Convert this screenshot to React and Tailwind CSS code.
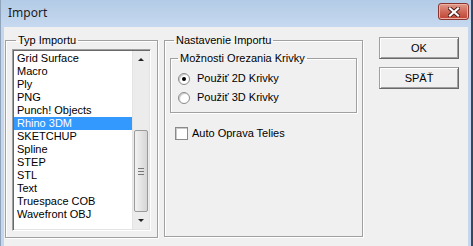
const FILE_TYPES = [
    'Grid Surface',
    'Macro',
    'Ply',
    'PNG',
    'Punch! Objects',
    'Rhino 3DM',
    'SKETCHUP',
    'Spline',
    'STEP',
    'STL',
    'Text',
    'Truespace COB',
    'Wavefront OBJ',
];

function Radio({ checked, label }) {
    return (
        <div className="flex items-center h-[19px]">
            <span className="w-[12px] h-[12px] rounded-full border border-[#8a8a8a] bg-white shadow-[inset_1px_1px_1px_#c8c8c8] flex items-center justify-center">
                {checked && <span className="w-[4px] h-[4px] rounded-full bg-black" />}
            </span>
            <span className="ml-[7px]">{label}</span>
        </div>
    );
}

function ScrollBar() {
    return (
        <div className="w-[17px] flex flex-col bg-[#ececec] border-l border-[#e3e3e3]">
            <div className="h-[17px] flex items-center justify-center">
                <span className="w-0 h-0 border-x-[3px] border-x-transparent border-b-[3px] border-b-[#222]" />
            </div>
            <div className="flex-1 flex flex-col">
                <div className="h-[62px]" />
                <div className="h-[82px] mx-[1px] rounded-[2px] border border-[#9a9a9a] bg-gradient-to-r from-[#f2f2f2] to-[#d6d6d6] flex flex-col items-center justify-center gap-[2px]">
                    <span className="w-[6px] h-px bg-[#777]" />
                    <span className="w-[6px] h-px bg-[#777]" />
                    <span className="w-[6px] h-px bg-[#777]" />
                </div>
                <div className="flex-1" />
            </div>
            <div className="h-[17px] flex items-center justify-center">
                <span className="w-0 h-0 border-x-[3px] border-x-transparent border-t-[3px] border-t-[#222]" />
            </div>
        </div>
    );
}

export default function App() {
    const groupClasses = "border border-[#a0a0a0] shadow-[1px_1px_0_#ffffff,inset_1px_1px_0_#ffffff]";
    const buttonClasses = "w-[80px] h-[22px] bg-[#f0f0f0] border border-[#a0a0a0] border-r-[#696969] border-b-[#696969] shadow-[inset_1px_1px_0_#ffffff,inset_-1px_-1px_0_#a0a0a0]";

    return (
        <div className="w-[473px] h-[246px] flex flex-col bg-[#c4d7ee] border-l border-[#8fa3bb] border-r-2 border-r-[#34485f] font-['Liberation_Sans',Arial,sans-serif] text-[11px] text-black overflow-hidden">
            {/* title bar */}
            <div className="h-[27px] flex items-center justify-between pl-[7px] pr-[2px] bg-gradient-to-b from-[#b3cbe6] to-[#c6d9ef]">
                <span className="font-['Noto_Sans',sans-serif] text-[12px] text-[#1b1b1b] -mt-[2px]">Import</span>
                <div className="w-[31px] h-[17px] -mt-[4px] rounded-[3px] border border-[#8a3530] bg-gradient-to-b from-[#e09a8a] via-[#cf6a5a] to-[#c0402f] flex items-center justify-center shadow-[inset_0_0_0_1px_#eeb0a2]">
                    <svg width="12" height="10" viewBox="0 0 12 10">
                        <path d="M2 1.5 L10 8.5 M10 1.5 L2 8.5" stroke="#4a1a16" strokeWidth="4" strokeLinecap="square" />
                        <path d="M2 1.5 L10 8.5 M10 1.5 L2 8.5" stroke="#ffffff" strokeWidth="2.2" strokeLinecap="square" />
                    </svg>
                </div>
            </div>

            {/* body */}
            <div className="flex-1 ml-[3px] mr-[3px] bg-[#f0f0f0] flex items-start">
                {/* Typ Importu */}
                <fieldset className={`${groupClasses} ml-[1px] mt-[7px] w-[153px] h-[204px] px-[6px]`}>
                    <legend className="ml-[4px] px-[2px] leading-[13px]">Typ Importu</legend>
                    <div className="mt-[2px] h-[182px] flex border border-[#a0a0a0] border-r-white border-b-white shadow-[inset_1px_1px_0_#696969,inset_-1px_-1px_0_#e3e3e3]">
                        <div className="flex-1 bg-white ml-[1px] mt-[1px] mb-[1px] pt-[1px]">
                            {FILE_TYPES.map((t) => (
                                <div
                                    key={t}
                                    className={`h-[13px] leading-[13px] pl-[3px] whitespace-nowrap ${t === 'Rhino 3DM' ? 'bg-[#3399ff] text-white' : ''}`}
                                >
                                    {t}
                                </div>
                            ))}
                        </div>
                        <div className="flex my-[1px] mr-[1px]">
                            <ScrollBar />
                        </div>
                    </div>
                </fieldset>

                {/* Nastavenie Importu */}
                <fieldset className={`${groupClasses} ml-[6px] mt-[7px] w-[199px] h-[203px] px-[5px]`}>
                    <legend className="ml-[4px] px-[2px] leading-[13px]">Nastavenie Importu</legend>
                    <fieldset className={`${groupClasses} mt-[5px] h-[61px] px-[7px]`}>
                        <legend className="ml-[0px] px-[2px] leading-[13px]">Možnosti Orezania Krivky</legend>
                        <div className="mt-[4px]">
                            <Radio checked label="Použiť 2D Krivky" />
                            <Radio label="Použiť 3D Krivky" />
                        </div>
                    </fieldset>
                    <div className="flex items-center mt-[12px] ml-[5px]">
                        <span className="w-[13px] h-[13px] bg-white border border-[#8a8a8a] shadow-[inset_1px_1px_0_#c8c8c8]" />
                        <span className="ml-[4px]">Auto Oprava Telies</span>
                    </div>
                </fieldset>

                {/* buttons */}
                <div className="ml-[16px] mt-[10px] flex flex-col gap-[8px]">
                    <button className={buttonClasses}>OK</button>
                    <button className={buttonClasses}>SPÄŤ</button>
                </div>
            </div>
        </div>
    );
}
